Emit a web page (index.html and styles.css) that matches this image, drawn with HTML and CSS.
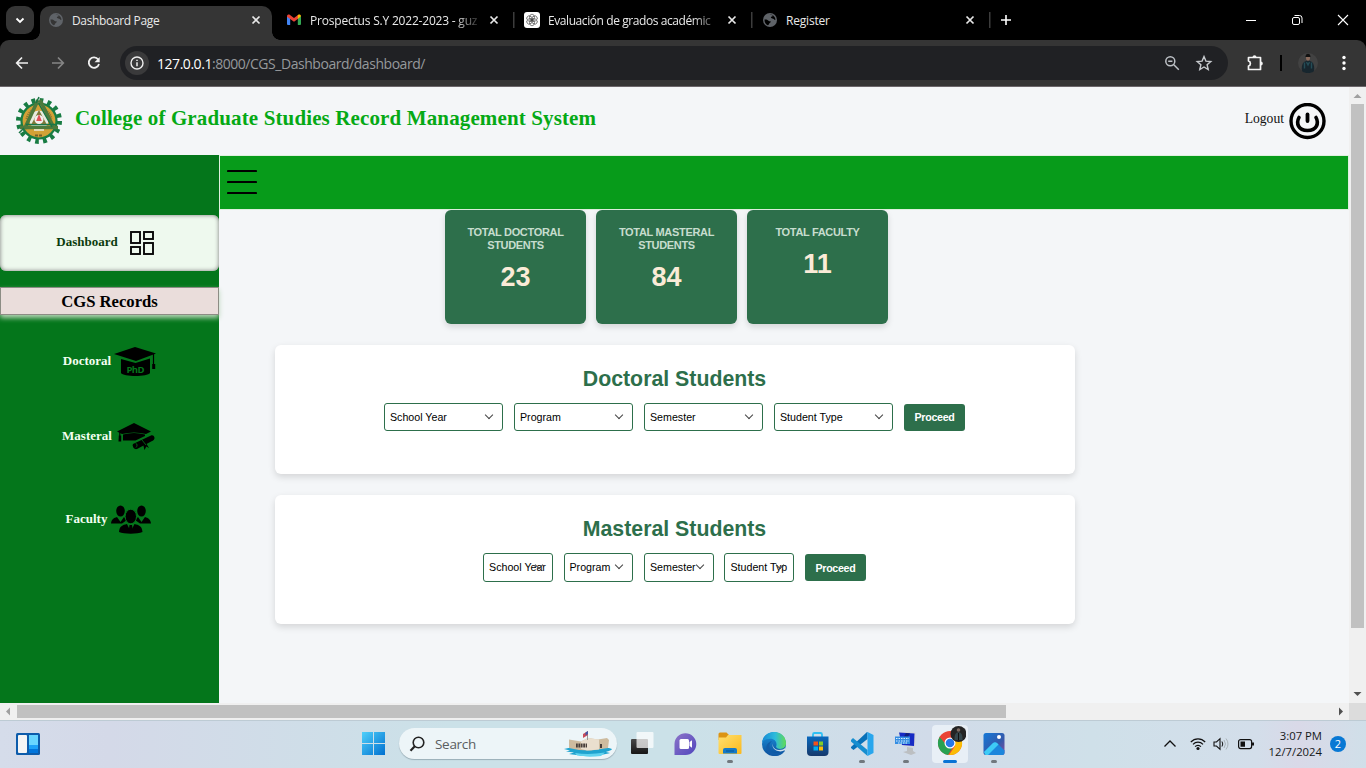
FILE: index.html
```html
<!DOCTYPE html>
<html lang="en">
<head>
<meta charset="utf-8">
<title>Dashboard Page</title>
<link rel="stylesheet" href="styles.css">
</head>
<body>
<svg class="defs" width="0" height="0">
  <defs>
    <linearGradient id="win" x1="0" y1="0" x2="1" y2="1"><stop offset="0" stop-color="#4fd0fa"/><stop offset="1" stop-color="#0070d0"/></linearGradient>
    <linearGradient id="chat" x1="0" y1="0" x2="1" y2="1"><stop offset="0" stop-color="#8d74c8"/><stop offset="1" stop-color="#5046bd"/></linearGradient>
    <linearGradient id="fold" x1="0" y1="0" x2="1" y2="1"><stop offset="0" stop-color="#ffe070"/><stop offset="1" stop-color="#fbb91d"/></linearGradient>
    <linearGradient id="edge1" x1="0" y1="0" x2="1" y2="0"><stop offset="0" stop-color="#1789d5"/><stop offset=".55" stop-color="#2cbbdc"/><stop offset="1" stop-color="#63dc52"/></linearGradient>
    <linearGradient id="edge2" x1="0" y1="0" x2="0" y2="1"><stop offset="0" stop-color="#1b93de"/><stop offset="1" stop-color="#0c4f9b"/></linearGradient>
    <linearGradient id="store" x1="0" y1="0" x2="0" y2="1"><stop offset="0" stop-color="#0968bd"/><stop offset="1" stop-color="#16396b"/></linearGradient>
    <linearGradient id="photo" x1="0" y1="0" x2="1" y2="1"><stop offset="0" stop-color="#1479d8"/><stop offset=".6" stop-color="#3459ab"/><stop offset="1" stop-color="#8a4b9e"/></linearGradient>
    <linearGradient id="dark" x1="0" y1="0" x2="0" y2="1"><stop offset="0" stop-color="#484848"/><stop offset="1" stop-color="#161616"/></linearGradient>
    <symbol id="globe" viewBox="0 0 16 16"><circle cx="8" cy="8" r="7" fill="#5f6368"/><path d="M2.500 7.500c1.500-.3 3 .2 4 1.200.8.800 2 .2 2.300 1-.1 1-1.300 1-1.700 2-.2.700-.6 1.300-1.300 1.600C4 12.500 2.300 10.500 2.500 7.500zM7.500 3c1.500-.7 3.500-.2 4 .6-.5 1-2.500.9-2.700 2 .3 1.200 2.500.6 3.300 1.700.3.800 1 .7 1.300.4C13.500 5 11 2.300 7.500 3z" fill="currentColor"/></symbol>
    <symbol id="close" viewBox="0 0 16 16"><path d="M4.500 4.500l7 7m0-7l-7 7" stroke="#e8e8e8" stroke-width="1.700" fill="none"/></symbol>
  </defs>
</svg>

<div class="tabstrip">
  <div class="tab-search"><svg width="14" height="14" viewBox="0 0 14 14"><path d="M3.500 5.500L7 9l3.500-3.500" fill="none" stroke="#fff" stroke-width="1.800"/></svg></div>
  <div class="tab active"><svg class="fav"><use href="#globe"/></svg><span class="tab-title t1">Dashboard Page</span><svg class="x"><use href="#close"/></svg></div>
  <div class="tab"><svg class="fav" viewBox="0 0 16 16"><path d="M1 4l3.200 2v7H2a1 1 0 0 1-1-1z" fill="#4285f4"/><path d="M15 4l-3.200 2v7H14a1 1 0 0 0 1-1z" fill="#34a853"/><path d="M1 4.200C1 2.500 3 2.200 4 3l4 3 4-3v3.800L8 9.800 1 4.800z" fill="#ea4335"/><path d="M12 3c1-.8 3-.500 3 1.300L11.800 7V3.100z" fill="#fbbc04"/></svg><span class="tab-title fade t2">Prospectus S.Y 2022-2023 - guz</span><svg class="x"><use href="#close"/></svg></div>
  <div class="tab sep"><svg class="fav" viewBox="0 0 16 16"><rect width="16" height="16" rx="3" fill="#fff"/><g fill="none" stroke="#444" stroke-width=".65"><ellipse cx="8" cy="5.400" rx="2.500" ry="3.200"/><ellipse cx="8" cy="5.400" rx="2.500" ry="3.200" transform="rotate(60 8 8)"/><ellipse cx="8" cy="5.400" rx="2.500" ry="3.200" transform="rotate(120 8 8)"/><ellipse cx="8" cy="5.400" rx="2.500" ry="3.200" transform="rotate(180 8 8)"/><ellipse cx="8" cy="5.400" rx="2.500" ry="3.200" transform="rotate(240 8 8)"/><ellipse cx="8" cy="5.400" rx="2.500" ry="3.200" transform="rotate(300 8 8)"/></g></svg><span class="tab-title fade t3">Evaluación de grados académic</span><svg class="x"><use href="#close"/></svg></div>
  <div class="tab sep"><svg class="fav"><use href="#globe"/></svg><span class="tab-title">Register</span><svg class="x"><use href="#close"/></svg></div>
  <div class="newtab"><svg width="16" height="16" viewBox="0 0 16 16"><path d="M8 3v10M3 8h10" stroke="#fff" stroke-width="1.600"/></svg></div>
  <div class="winctl">
    <svg width="46" height="40" viewBox="0 0 46 40"><path d="M18 20.500h10" stroke="#fff"/></svg>
    <svg width="46" height="40" viewBox="0 0 46 40"><g fill="none" stroke="#fff"><rect x="18.500" y="17.500" width="7" height="7" rx="1.500"/><path d="M20.500 15.500h5a2.500 2.500 0 0 1 2.500 2.500v5"/></g></svg>
    <svg width="46" height="40" viewBox="0 0 46 40"><path d="M18 15l10 10m0-10L18 25" stroke="#fff" stroke-width="1.100"/></svg>
  </div>
</div>

<div class="toolbar">
  <svg class="nav" viewBox="0 0 36 46"><path d="M28 23H17m5-5.500L16.700 23l5.300 5.500" fill="none" stroke="#f0f0f0" stroke-width="1.700"/></svg>
  <svg class="nav" viewBox="0 0 36 46"><path d="M16 23h11m-5-5.500l5.300 5.500-5.300 5.500" fill="none" stroke="#858585" stroke-width="1.700"/></svg>
  <svg class="nav" viewBox="0 0 36 46"><path d="M26.200 19.500A5.200 5.200 0 1 0 27 24" fill="none" stroke="#f0f0f0" stroke-width="1.800"/><path d="M27.700 17v5.200h-5.200z" fill="#f0f0f0"/></svg>
  <div class="omnibox">
    <div class="info"><svg width="16" height="16" viewBox="0 0 16 16"><circle cx="8" cy="8" r="6" fill="none" stroke="#eee" stroke-width="1.400"/><path d="M8 7.200v4M8 4.700v1.400" stroke="#eee" stroke-width="1.500"/></svg></div>
    <span class="url"><b>127.0.0.1</b>:8000/CGS_Dashboard/dashboard/</span>
    <svg class="zoomout" width="16" height="16" viewBox="0 0 16 16"><circle cx="6.300" cy="6.300" r="4.500" fill="none" stroke="#bdc1c6" stroke-width="1.500"/><path d="M4.200 6.300h4.200M9.800 9.800l5 5" stroke="#bdc1c6" stroke-width="1.500"/></svg>
    <svg class="star" width="18" height="18" viewBox="0 0 18 18"><path d="M9 2.500l1.900 4.600 4.900.4-3.700 3.200 1.100 4.800L9 13l-4.200 2.500 1.100-4.800-3.700-3.200 4.900-.4z" fill="none" stroke="#c7cace" stroke-width="1.400"/></svg>
  </div>
  <svg class="ext" width="18" height="18" viewBox="0 0 18 18"><path d="M2.500 3.500H14.500V15.500H2.500V12C5 11.500 5 7.500 2.500 7z" fill="none" stroke="#f5f5f5" stroke-width="1.700" stroke-linejoin="round"/><path d="M6.500 3.200a2 2 0 0 1 4 0zM14.800 7.500a2 2 0 0 1 0 4z" fill="#f5f5f5"/></svg>
  <i class="bar"></i>
  <svg class="avatar" width="20" height="20" viewBox="0 0 20 20"><circle cx="10" cy="10" r="10" fill="#424242"/><path d="M5 19c-2-1-1.500-8 1-10l4-2 4 2c2.500 2 3 9 1 10-3 1.500-7 1.500-10 0z" fill="#17262e"/><path d="M6.500 9.500v6M13.500 9.500v6M8.500 9l1.500 3 1.500-3" stroke="#244c56" stroke-width="1.400" fill="none"/><ellipse cx="10" cy="4.800" rx="2" ry="3" fill="#8a6b5d"/><path d="M7.400 4c0-4.500 5.200-4.500 5.200 0z" fill="#111"/></svg>
  <svg class="kebab" width="6" height="18" viewBox="0 0 6 18"><g fill="#fff"><circle cx="3" cy="3.500" r="1.700"/><circle cx="3" cy="9" r="1.700"/><circle cx="3" cy="14.500" r="1.700"/></g></svg>
</div>

<div class="viewport">
  <div class="page">
    <header class="site-head">
      <svg class="logo" width="48" height="48" viewBox="0 0 48 48">
        <circle cx="24" cy="25" r="20.500" fill="none" stroke="#187c43" stroke-width="5" stroke-dasharray="3.700 4.350"/>
        <circle cx="24" cy="25" r="17.500" fill="#d3a136" stroke="#187c43" stroke-width="2.200"/>
        <path d="M11.500 23a13 13 0 0 1 6-9M30.500 14a13 13 0 0 1 6 9" fill="none" stroke="#8d7532" stroke-width="2" stroke-dasharray="1.200 .9"/>
        <circle cx="24" cy="24" r="9.500" fill="#e8ecdf"/>
        <path d="M23 4L9.500 33M25 4l14 28M5 31.500h38" stroke="#4e7a3c" stroke-width="3.600" fill="none"/>
        <path d="M24 1l-3 6M4 37l5-5M24 8l13 23M11 28.500h29" stroke="#1a7545" stroke-width="1.500" fill="none"/>
        <path d="M24 14l7.500 14h-15z" fill="#7d7a3a"/>
        <circle cx="24" cy="23.500" r="4.500" fill="#f5efed"/><path d="M24 18l2.800 7h-5.600z" fill="#df5058"/>
        <path d="M19 34h10" stroke="#e3d9b4" stroke-width="2"/><path d="M20 39.500h8" stroke="#775f27" stroke-width="2" stroke-dasharray="3 1"/>
      </svg>
      <h1>College of Graduate Studies Record Management System</h1>
      <a class="logout">Logout</a>
      <svg width="37" height="37" viewBox="0 0 37 37"><g fill="none" stroke="#000" stroke-linecap="round"><circle cx="18.500" cy="18" r="16.500" stroke-width="3.400"/><path d="M10 14.500C7 20 9 27.500 18.500 27.500S30 20 27 14.500" stroke-width="3.600"/><path d="M18.500 11.500v6.500" stroke-width="3.800"/></g></svg>
    </header>
    <div class="cols">
      <nav class="side">
        <a class="dash"><span>Dashboard</span><svg width="26" height="26" viewBox="0 0 26 26"><g fill="none" stroke="#080808" stroke-width="1.900"><rect x="2" y="2" width="9" height="11"/><rect x="15" y="2" width="9" height="7"/><rect x="2" y="17" width="9" height="7"/><rect x="15" y="13" width="9" height="11"/></g></svg></a>
        <div class="records">CGS Records</div>
        <a class="item doc"><span>Doctoral</span><svg width="42" height="30" viewBox="0 0 42 30"><path d="M0 7L21 0 42 6.500 22 14z"/><path d="M7 12l14.500 4L36 11.500V26c-2 4-27 4-29 0z"/><path d="M39.500 7v11" stroke="#000" stroke-width="1.200"/><path d="M38.200 17h3v5h-3z"/><text x="12.500" y="26" class="phd" textLength="18">PhD</text></svg></a>
        <a class="item mas"><span>Masteral</span><svg width="38" height="28" viewBox="0 0 38 28"><path d="M0 8.500L17 0l17 8.500-5 2.500q-12-3-24 0z"/><path d="M6 11.500q11-3 22 0v1.500l-9.500 4.500H6z"/><path d="M2.800 9v5" stroke="#000" stroke-width="1.200"/><path d="M1.800 12.500h2.400v6H1.500z"/><path d="M16 21l18-8.500c3-1 5 3 2 5L20 26c-3 1-5-3-4-5z"/><path d="M26 21l1.500 6 1.800-3.500L32 25l-3-5z"/><path d="M25 17l4 5M18.500 20c2 1 2 3 .500 4.500" stroke="#04761b" fill="none" stroke-width=".8"/></svg></a>
        <a class="item fac"><span>Faculty</span><svg width="40" height="29" viewBox="0 0 40 29"><ellipse cx="9.500" cy="6" rx="4.300" ry="5.600"/><ellipse cx="30.500" cy="6" rx="4.300" ry="5.600"/><path d="M0 18.500c.5-4.500 3-5.500 6-6.500l3.500 5 3.500-5 3 3-5 3.500zM40 18.500c-.5-4.500-3-5.500-6-6.500l-3.500 5-3.500-5-3 3 5 3.500z"/><ellipse cx="19.800" cy="11.500" rx="5.700" ry="7.300" stroke="#04761b"/><path d="M8 27c.5-6 3.500-7 8-8l3.700 7.500L23.500 19c4.500 1 7.500 2 8 8-5 2.300-18.500 2.300-23.500 0z"/><path d="M18.500 20h2.500l1 6-2.200 2-2.200-2z"/></svg></a>
      </nav>
      <main>
        <div class="topbar"><svg width="30" height="26" viewBox="0 0 30 26"><path d="M1 2h28M1 13h28M1 24h28" stroke="#000" stroke-width="2.200" stroke-linecap="round"/></svg></div>
        <section class="cards">
          <div class="card"><h3>TOTAL DOCTORAL STUDENTS</h3><p>23</p></div>
          <div class="card"><h3>TOTAL MASTERAL STUDENTS</h3><p>84</p></div>
          <div class="card"><h3>TOTAL FACULTY</h3><p>11</p></div>
        </section>
        <section class="panel">
          <h2>Doctoral Students</h2>
          <div class="filters">
            <div class="select">School Year<i></i></div><div class="select">Program<i></i></div><div class="select">Semester<i></i></div><div class="select">Student Type<i></i></div><button>Proceed</button>
          </div>
        </section>
        <section class="panel">
          <h2>Masteral Students</h2>
          <div class="filters narrow">
            <div class="select">School Year<i></i></div><div class="select">Program<i></i></div><div class="select">Semester<i></i></div><div class="select">Student Typ<i></i></div><button>Proceed</button>
          </div>
        </section>
      </main>
    </div>
  </div>
  <div class="vscroll"><svg width="17" height="17" viewBox="0 0 17 17"><path d="M4.500 11L8.500 7l4 4z" fill="#a0a0a0"/></svg><div class="vthumb"></div><svg width="17" height="17" viewBox="0 0 17 17"><path d="M4.500 6l4 4 4-4z" fill="#505050"/></svg></div>
</div>
<div class="hscroll"><svg width="17" height="17" viewBox="0 0 17 17"><path d="M10 4.500L6 8.500l4 4z" fill="#a0a0a0"/></svg><div class="hthumb"></div><svg class="harrow" width="17" height="17" viewBox="0 0 17 17"><path d="M7 4.500l4 4-4 4z" fill="#505050"/></svg><div class="corner"></div></div>

<footer class="taskbar">
  <svg class="widgets" width="24" height="22" viewBox="0 0 24 22"><rect width="24" height="22" rx="1.500" fill="#0d5cab"/><rect x="2" y="2" width="9" height="18" rx="1" fill="#f5f5f5"/><path d="M13 2h9v10h-9z" fill="#68d6ff"/><path d="M13 12h9v4h-9z" fill="#1da2f8"/><path d="M13 16h9v4h-9z" fill="#0075dc"/></svg>
  <div class="cell"><svg width="24" height="24" viewBox="0 0 24 24"><path d="M0 0h11v11H0zM12 0h11v11H12zM0 12h11v11H0zM12 12h11v11H12z" fill="url(#win)"/></svg></div>
  <div class="search"><svg width="16" height="16" viewBox="0 0 16 16"><circle cx="9.500" cy="6.500" r="5.300" fill="none" stroke="#222" stroke-width="1.600"/><path d="M5.800 10.300L1.500 14.700" stroke="#222" stroke-width="2.200"/></svg><span>Search</span>
    <svg class="ship" width="50" height="26" viewBox="0 0 50 26"><path d="M1 18q7-2 12-1h25q7-1 11 1c-1 2-5 2-6 3l4 1c-8 3-33 3-41 1l5-1.500-8-1 4-1z" fill="#1fa3cf"/><path d="M12 22q14 2 30-.5l-4 3.500c-8 1-17 1-24-.5z" fill="#61d3ef"/><path d="M6 8.500l12 2 7-3.500 10 1.500L44 7l2 2-1 8-17 2.500-12-.5L6 17z" fill="#cdbb9f"/><path d="M25 7l11 1.500v10L24 19.500 18 18v-7.500z" fill="#eadfce"/><path d="M13 14.500h11" stroke="#493f3b" stroke-width="4" stroke-dasharray="1.800 .6"/><path d="M38 13v4" stroke="#493f3b" stroke-width="2"/><path d="M24.500 1v8" stroke="#999"/><path d="M20 3l5-3v4l-5 3z" fill="#c94b5a"/><path d="M22.500 1.500L25 0v3l-2.500 1.500z" fill="#4357a5"/></svg>
  </div>
  <div class="cell"><svg width="24" height="24" viewBox="0 0 24 24"><rect x="1" y="7" width="17" height="15" rx="1" fill="url(#dark)"/><rect x="6.500" y="0" width="17" height="16" rx="1" fill="#fff" opacity=".72"/></svg></div>
  <div class="cell"><svg width="24" height="24" viewBox="0 0 24 24"><path d="M.5 23V12A10.900 10.900 0 1 1 11.500 23z" fill="url(#chat)"/><rect x="5.500" y="7" width="9.500" height="10" rx="1.500" fill="#fff"/><path d="M15.500 10L18 8.300v7.400L15.500 14z" fill="#fff"/></svg></div>
  <div class="cell run"><svg width="24" height="24" viewBox="0 0 24 24"><path d="M.5 2A1.500 1.500 0 0 1 2 .5h6.500L11 3v5H.5z" fill="#dc9414"/><path d="M.5 5.500H8L10 3h13.500v18a1 1 0 0 1-1 1h-21a1 1 0 0 1-1-1z" fill="url(#fold)"/><path d="M5 21.500V18a2 2 0 0 1 2-2h10a2 2 0 0 1 2 2v3.500z" fill="#147ac8"/><path d="M8 19h8" stroke="#075493"/></svg></div>
  <div class="cell"><svg width="24" height="24" viewBox="0 0 24 24"><circle cx="12" cy="12" r="12" fill="url(#edge2)"/><path d="M0 11C1-3 23-4 24 11c0 7-8 7-10 4 2-5-2-9-7-8-4 0-6 2-7 4z" fill="url(#edge1)"/><path d="M10 9c-5 4-2 11 3 12 4 .5 7-1 9-3 1 0 1 1 0 2-3 4-9 5-13 3C2 20 3 11 10 9z" fill="#125ca8"/><path d="M12 10c-3 3 0 8 5 8 3 0 5-1 6-2v2c-2 1-4 2-7 1-5-1-7-6-4-9z" fill="#d2dfea"/></svg></div>
  <div class="cell"><svg width="24" height="24" viewBox="0 0 24 24"><path d="M7 6V2.500A1.500 1.500 0 0 1 8.500 1h6A1.500 1.500 0 0 1 16 2.500V6" stroke="#2fc0f4" stroke-width="1.800" fill="none"/><path d="M1 4.500h21.500V20a4 4 0 0 1-4 4H5a4 4 0 0 1-4-4z" fill="url(#store)"/><path d="M7.500 9.500H12V13.500H7.500z" fill="#f1511b"/><path d="M13 9.500h4v4H13z" fill="#80cc28"/><path d="M7.500 14.500H12v4H7.500z" fill="#00adef"/><path d="M13 14.500h4v4H13z" fill="#fbbc09"/></svg></div>
  <div class="cell run"><svg width="24" height="24" viewBox="0 0 24 24"><path d="M17.500 0v7L3.500 18 1 16v-1L17 0z" fill="#0871b9"/><path d="M1 8l2-2 14.500 12v6L1 9.500z" fill="#168ed0"/><path d="M17.500 0L23.500 3v18l-6 3z" fill="#28a6ed"/></svg></div>
  <div class="cell run"><svg width="24" height="24" viewBox="0 0 24 24"><path d="M5 0l17 .5-1 15-11-1z" fill="#d4d6d9"/><path d="M5 .5l15.500 1-.5 12.500-12-1z" fill="#172bc4"/><path d="M12 1l4 .500-6 9-3-.4z" fill="#101f7d"/><path d="M1 4.500h15v7.500H1z" fill="#348de2"/><path d="M2 6.500h13M2 9h13M4 11h9" stroke="#d8edff" stroke-width="1.200" stroke-dasharray="1.500 1"/><path d="M13 15l6 1v3l3 2-5 2-8-3 4-1z" fill="#bcbfc2"/></svg></div>
  <div class="cell run current"><svg width="32" height="32" viewBox="0 0 32 32"><circle cx="16" cy="17" r="12" fill="#ea4335"/><path d="M5.600 11A12 12 0 0 0 14 29l6-10-8-.5z" fill="#27a152"/><path d="M15 29A12 12 0 0 0 27 12H16l5 8z" fill="#fbbc05"/><circle cx="16" cy="17" r="5.500" fill="#fff"/><circle cx="16" cy="17" r="4.300" fill="#2678e8"/><circle cx="24.500" cy="8" r="8" fill="#242424"/><path d="M20.500 14c0-6 1-7 4-8 3 1 4 2 4 8z" fill="#34464c"/><circle cx="24.500" cy="4" r="1.800" fill="#806c63"/><path d="M24.500 7v7" stroke="#111"/></svg></div>
  <div class="cell run"><svg width="24" height="24" viewBox="0 0 24 24"><rect x="1.500" y="1" width="21" height="22" rx="2.500" fill="url(#photo)"/><path d="M2 20l9-9q2-1.500 4 0l7.500 7.500V21a2 2 0 0 1-2 2h-17z" fill="#1c86dc"/><path d="M2 20l9-9q2-1.500 4 0l1.500 1.500L6 23H3.500z" fill="#3ecbf6"/><circle cx="17" cy="5" r="2" fill="#fff"/></svg></div>
  <div class="tray">
    <svg width="14" height="16" viewBox="0 0 14 16"><path d="M1.500 10.500L7 5l5.500 5.500" fill="none" stroke="#111" stroke-width="1.300"/></svg>
    <svg class="wifi" width="16" height="14" viewBox="0 0 16 14"><g fill="none" stroke="#111" stroke-width="1.200"><path d="M.800 5c4-4.300 10.400-4.300 14.400 0M3 7.400c2.800-3 7.200-3 10 0M5.100 9.700c1.600-1.800 4.200-1.800 5.800 0"/></g><circle cx="8" cy="11.500" r="1.600" fill="#111"/></svg>
    <svg class="vol" width="16" height="14" viewBox="0 0 16 14"><path d="M1 5h2.500L7 1.700v10.600L3.500 9H1z" fill="none" stroke="#111" stroke-width="1.100"/><path d="M9 4.500q1.500 2.500 0 5" fill="none" stroke="#111"/><path d="M11 3q3 4 0 8M13 1.500q4 5.500 0 11" fill="none" stroke="#aab3b8"/></svg>
    <svg class="bat" width="17" height="12" viewBox="0 0 17 12"><rect x=".6" y="1.600" width="13" height="9" rx="2" fill="none" stroke="#111" stroke-width="1.200"/><path d="M2.500 3.500H7v5.300H2.500zM14 4.500h2v3h-2z" fill="#111"/></svg>
    <div class="clock"><span>3:07 PM</span><span>12/7/2024</span></div>
    <div class="badge">2</div>
  </div>
</footer>
</body>
</html>
```
FILE: styles.css
```css
* { box-sizing: border-box; }
body { margin: 0; width: 1366px; height: 768px; overflow: hidden; display: flex; flex-direction: column; font-family: "Open Sans", "Noto Sans", sans-serif; background: #000; }
svg { display: block; flex: none; }
.defs { position: absolute; }
h1, h2, h3, p { margin: 0; }

/* browser tabs */
.tabstrip { height: 40px; background: #000; display: flex; flex: none; color: #e9e9e9; font-size: 12px; }
.tab-search { width: 28px; height: 28px; margin: 6px 6px 0; border-radius: 9px; background: #353535; display: flex; align-items: center; justify-content: center; }
.tab { width: 238px; height: 40px; padding: 0 11px; display: flex; align-items: center; gap: 8px; color: #e9e9e9; }
.tab.active { position: relative; width: 232px; height: 34px; margin: 6px 3px 0 0; padding: 0 8px 6px; background: #353535; border-radius: 10px 10px 0 0; }
.tab.active::before, .tab.active::after { content: ""; position: absolute; bottom: 0; width: 8px; height: 8px; }
.tab.active::before { left: -8px; background: radial-gradient(circle at 0 0, #000 7.500px, #353535 8px); }
.tab.active::after { right: -8px; background: radial-gradient(circle at 100% 0, #000 7.500px, #353535 8px); }
.fav { width: 16px; height: 16px; color: #000; }
.active .fav { color: #353535; }
.x { width: 16px; height: 16px; }
.tab-title { flex: 1; white-space: nowrap; letter-spacing: -0.2px; line-height: 18px; padding-top: 1px; }
.t1 { letter-spacing: -0.35px; }
.t3 { letter-spacing: -0.42px; }
.fade { -webkit-mask-image: linear-gradient(90deg, #000 86%, #0003 100%); }
.sep { background: linear-gradient(#3c3c3c, #3c3c3c) 0 12px / 1.500px 16px no-repeat; }
.newtab { width: 34px; padding: 12px 9px; background: linear-gradient(#3c3c3c, #3c3c3c) 0 12px / 1.500px 16px no-repeat; }
.winctl { margin-left: auto; display: flex; }

/* browser toolbar */
.toolbar { height: 47px; flex: none; background: #353535; border-radius: 9px 9px 0 0; border-bottom: 1px solid #6b666a; display: flex; align-items: center; }
.nav { width: 36px; height: 46px; }
.omnibox { width: 1108px; height: 34px; margin-left: 12px; border-radius: 17px; background: #202124; display: flex; align-items: center; padding-left: 5px; }
.info { width: 24px; height: 24px; border-radius: 12px; background: #3a3a3b; display: flex; align-items: center; justify-content: center; }
.url { margin-left: 8px; flex: 1; font-size: 14px; letter-spacing: -0.46px; color: #96999c; }
.url b { font-weight: 400; color: #fff; }
.zoomout { margin-right: 15px; }
.star { margin-right: 15px; }
.ext { margin-left: 18px; }
.bar { width: 2px; height: 16px; margin-left: 16px; background: #000; }
.avatar { margin-left: 16px; }
.kebab { margin-left: 23px; }

/* page */
.viewport { height: 616px; flex: none; display: flex; }
.page { width: 1349px; background: #f4f6f8; display: flex; flex-direction: column; }
.site-head { height: 68px; flex: none; display: flex; padding: 9px 23px 0 15px; align-items: flex-start; }
.site-head h1 { margin: 10px auto 0 12px; font: bold 21px/24px "Liberation Serif", serif; letter-spacing: .13px; color: #05a915; white-space: nowrap; }
.logout { margin: 14px 5px 0 0; font: 13.600px/18px "Liberation Serif", serif; color: #101010; }
.site-head > svg:last-child { margin-top: 7px; }
.cols { flex: 1; display: flex; }
.side { width: 219px; background: #04761b; padding-top: 60px; font-family: "Liberation Serif", serif; }
.dash { height: 56px; border-radius: 6px; background: #eef9ee; box-shadow: inset 0 0 4px #777; display: flex; align-items: center; justify-content: center; gap: 11px; color: #0b3c0d; font-weight: bold; font-size: 13px; padding-right: 8px; }
.dash span { margin-bottom: 3px; }
.records { height: 28px; margin-top: 16px; border: 1px solid #8c8c84; background: #eadddb; box-shadow: 0 3px 5px #b8d5b8; text-align: center; font: bold 16.670px/27px "Liberation Serif", serif; color: #000; }
.item { display: flex; justify-content: center; align-items: center; height: 30px; color: #f3fff1; font-weight: bold; font-size: 13px; gap: 4px; }
.item span { line-height: 16px; }
.doc { margin-top: 32px; gap: 3px; }
.doc span { margin-bottom: 2px; }
.mas { margin-top: 45px; gap: 5px; padding-right: 2px; }
.mas span { margin-bottom: 2px; }
.fac { margin-top: 52px; padding-right: 2px; }
.phd { font: bold 9.500px "Open Sans", sans-serif; fill: #04761b; }
main { flex: 1; }
.topbar { height: 55px; border: 1px solid #dff0df; background: #079b1a; padding: 13px 0 0 7px; margin-left: 0; }
.cards { display: flex; gap: 10px; margin-left: 226px; font-family: "Liberation Sans", sans-serif; }
.card { width: 141px; height: 114px; border-radius: 6px; background: #2d6f4b; box-shadow: 0 3px 6px #0002; padding: 16px 20px; text-align: center; }
.card h3 { font-size: 11px; line-height: 13px; letter-spacing: -0.32px; color: #c7ddce; }
.card p { margin-top: 8px; font-size: 27px; line-height: 34px; font-weight: bold; color: #faebd7; }
.panel { width: 800px; height: 129px; margin: 21px 0 0 56px; padding-top: 21px; border-radius: 6px; background: #fff; box-shadow: 0 3px 7px #0002; font-family: "Liberation Sans", sans-serif; }
.panel h2 { font-size: 21.300px; line-height: 26px; text-align: center; color: #2d6f4b; letter-spacing: 0; padding-right: 1px; }
.filters { display: flex; justify-content: center; align-items: center; gap: 11px; margin-top: 11px; height: 28px; padding-right: 1px; }
.select { position: relative; width: 119px; height: 28px; border: 1px solid #2d6f4b; border-radius: 3px; background: #fff; padding-left: 5px; font-size: 10.670px; line-height: 27px; color: #000; white-space: nowrap; }
.select i { position: absolute; right: 10px; top: 8px; width: 6px; height: 6px; border: solid #444; border-width: 0 1px 1px 0; transform: rotate(45deg); }
button { width: 61px; height: 27px; padding: 0; border: 0; border-radius: 3px; background: #2d6f4b; color: #fff; font: bold 10.670px "Liberation Sans", sans-serif; letter-spacing: -0.3px; }
.narrow { height: 29px; gap: 10.700px; }
.narrow .select { width: 69.800px; height: 29px; }

/* scrollbars */
.vscroll { width: 17px; background: #f0f0f0; display: flex; flex-direction: column; justify-content: space-between; }
.vthumb { width: 13px; height: 524px; margin: 0 2px auto; background: #c1c1c1; }
.hscroll { height: 17px; flex: none; background: #f0f0f0; display: flex; }
.hthumb { width: 989px; height: 13px; margin-top: 2px; background: #c1c1c1; }
.harrow { margin-left: auto; }
.corner { width: 17px; background: #dcdcdc; }

/* taskbar */
.taskbar { height: 48px; flex: none; display: flex; align-items: center; padding: 0 0 1px 16px; box-shadow: inset 0 1px #bdcbd4; background: linear-gradient(90deg, #d5dcea 0, #d4d9e8 8%, #cbe1e8 33%, #cbe1e8 50%, #d1dbe9 68%, #cfe0e9 80%, #d3deea 92%, #d9d9e8 95%, #d0dfe9 100%); }
.widgets { margin-right: 312px; }
.cell { position: relative; width: 44px; height: 38px; display: flex; align-items: center; justify-content: center; }
.search { width: 218px; height: 31px; margin: 0 2px 0 3px; border-radius: 16px; background: #edf5f8; box-shadow: 0 1px 1px #9aaeb7; display: flex; align-items: center; padding-left: 10px; font-size: 13.500px; color: #5a5d60; }
.search + .cell { margin-left: 1px; }
.search span { margin-left: 10px; letter-spacing: -0.3px; }
.ship { margin-left: auto; margin-right: 4px; }
.run::after { content: ""; position: absolute; bottom: 0; left: 19px; width: 6px; height: 3px; border-radius: 2px; background: #71787e; }
.current::before { content: ""; position: absolute; inset: 0 4px 0 4px; border-radius: 4px; background: #e8eff6; }
.current svg { position: relative; margin-bottom: 4px; }
.current::after { left: 15px; width: 14px; background: #0873d5; }
.tray { margin-left: auto; display: flex; align-items: center; padding-right: 20px; }
.wifi { margin-left: 13px; }
.vol { margin-left: 7px; }
.bat { margin-left: 9px; }
.clock { width: 62px; margin-left: 5px; display: flex; flex-direction: column; text-align: right; font-size: 11.300px; line-height: 16px; letter-spacing: 0; color: #15181a; white-space: nowrap; }
.badge { width: 16px; height: 16px; margin-left: 8px; border-radius: 8px; background: #0878d4; color: #fff; text-align: center; font-size: 11px; line-height: 16px; }
```
